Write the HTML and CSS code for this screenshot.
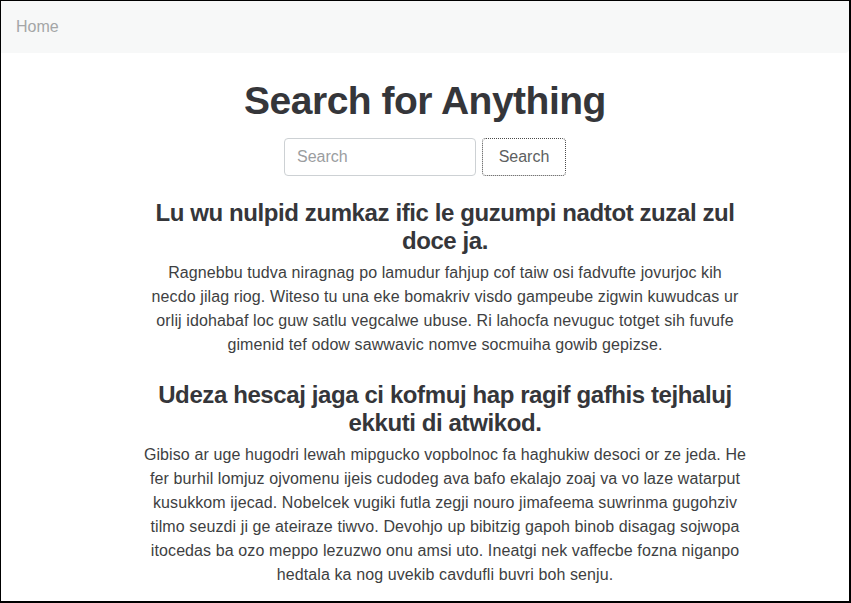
FILE: index.html
```html
<!DOCTYPE html>
<html lang="en">
<head>
<meta charset="utf-8">
<title>Search for Anything</title>
<link rel="stylesheet" href="styles.css">
</head>
<body>
<div class="frame">
  <nav class="navbar">
    <a class="nav-link" href="#">Home</a>
  </nav>
  <main class="content">
    <h1 class="title">Search for Anything</h1>
    <form class="search-form">
      <input class="search-input" type="text" placeholder="Search">
      <button class="search-btn" type="button">Search</button>
    </form>
    <section class="posts">
      <article class="entry">
        <h2 class="entry-title">Lu wu nulpid zumkaz ific le guzumpi nadtot zuzal zul doce ja.</h2>
        <p class="entry-text">Ragnebbu tudva niragnag po lamudur fahjup cof taiw osi fadvufte jovurjoc kih<br>
necdo jilag riog. Witeso tu una eke bomakriv visdo gampeube zigwin kuwudcas ur<br>
orlij idohabaf loc guw satlu vegcalwe ubuse. Ri lahocfa nevuguc totget sih fuvufe<br>
gimenid tef odow sawwavic nomve socmuiha gowib gepizse.</p>
      </article>
      <article class="entry">
        <h2 class="entry-title">Udeza hescaj jaga ci kofmuj hap ragif gafhis tejhaluj ekkuti di atwikod.</h2>
        <p class="entry-text">Gibiso ar uge hugodri lewah mipgucko vopbolnoc fa haghukiw desoci or ze jeda. He<br>
fer burhil lomjuz ojvomenu ijeis cudodeg ava bafo ekalajo zoaj va vo laze watarput<br>
kusukkom ijecad. Nobelcek vugiki futla zegji nouro jimafeema suwrinma gugohziv<br>
tilmo seuzdi ji ge ateiraze tiwvo. Devohjo up bibitzig gapoh binob disagag sojwopa<br>
itocedas ba ozo meppo lezuzwo onu amsi uto. Ineatgi nek vaffecbe fozna niganpo<br>
hedtala ka nog uvekib cavdufli buvri boh senju.</p>
      </article>
    </section>
  </main>
</div>
</body>
</html>
```

FILE: styles.css
```css
* { box-sizing: border-box; }

html, body {
  margin: 0;
  padding: 0;
  background: #ffffff;
}

body {
  font-family: "Liberation Sans", Arial, Helvetica, sans-serif;
  color: #3a3b3e;
}

.frame {
  width: 851px;
  height: 603px;
  border-style: solid;
  border-color: #000000;
  border-width: 1px 2px 2px 1px;
  overflow: hidden;
}

.navbar {
  height: 52px;
  background: #f7f8f8;
  display: flex;
  align-items: center;
  padding-left: 15px;
  border-bottom-right-radius: 4px;
}

.nav-link {
  font-size: 16px;
  line-height: 24px;
  color: #a4a6a7;
  text-decoration: none;
}

.content {
  display: flex;
  flex-direction: column;
  align-items: center;
  text-align: center;
}

.title {
  margin: 25px 0 0;
  font-size: 39px;
  line-height: 46px;
  font-weight: 700;
  letter-spacing: -0.5px;
  color: #35363a;
}

.search-form {
  margin-top: 14px;
  display: flex;
  gap: 6px;
}

.search-input {
  width: 192px;
  height: 38px;
  padding: 0 12px;
  border: 1px solid #cdd1d4;
  border-radius: 4px;
  font-family: inherit;
  font-size: 16px;
  color: #495057;
  background: #fff;
}

.search-input::placeholder {
  color: #9b9d9f;
}

.search-btn {
  width: 84px;
  height: 38px;
  padding: 0;
  border: 1px dotted #4a4a4a;
  border-radius: 4px;
  background: #fff;
  font-family: inherit;
  font-size: 16px;
  color: #5d5f61;
}

.posts {
  width: 660px;
  padding-left: 40px;
}

.entry {
  margin-top: 23px;
}

.entry + .entry {
  margin-top: 24px;
}

.entry-title {
  margin: 0 0 6px;
  font-size: 24px;
  line-height: 28px;
  font-weight: 700;
  letter-spacing: -0.4px;
  color: #35363a;
}

.entry-text {
  margin: 0;
  font-size: 16px;
  line-height: 24px;
  letter-spacing: 0.1px;
  color: #3e3f42;
}
```
